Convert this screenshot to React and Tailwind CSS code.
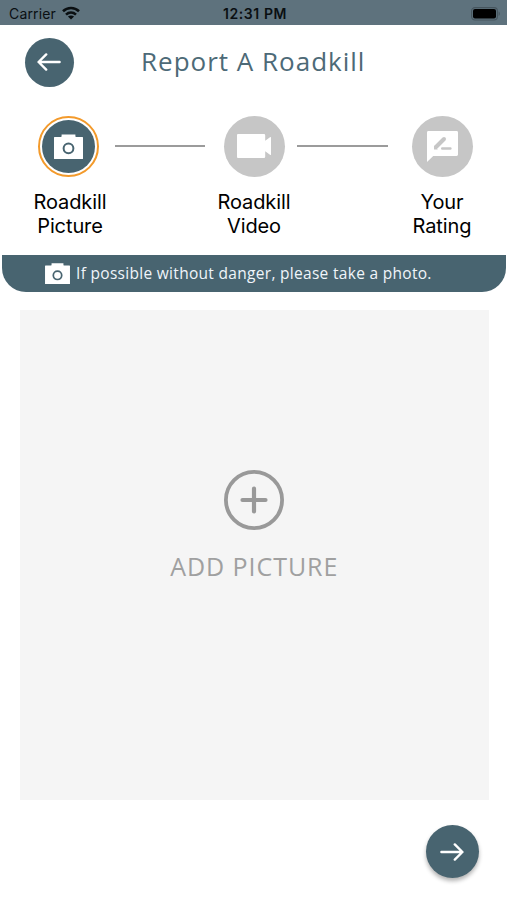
import { clsx } from 'clsx';

function WifiIcon() {
  return (
    <svg viewBox="0 0 18 14" className="w-[18px] h-[14px] -mt-[2px]" fill="none" stroke="#0a0f12" strokeWidth="2.6">
      <path d="M1 5.2C5.5 0.9 12.5 0.9 17 5.2" />
      <path d="M4 8.6C6.9 6 11.1 6 14 8.6" />
      <path d="M9 13.6L5.9 10.5C7.6 9 10.4 9 12.1 10.5Z" fill="#0a0f12" stroke="none" />
    </svg>
  );
}

function BatteryIcon() {
  return (
    <svg viewBox="0 0 30 14" className="w-[30px] h-[14px]">
      <rect x="0.6" y="0.6" width="25.8" height="12.4" rx="3.4" fill="none" stroke="#46555e" strokeWidth="1.1" />
      <rect x="2" y="2" width="23" height="9.6" rx="2" fill="#000" />
      <path d="M27.6 4.6C29.2 5.2 29.2 8.4 27.6 9Z" fill="#46555e" />
    </svg>
  );
}

function CameraIcon({ className }) {
  return (
    <svg viewBox="0 0 29 25" className={className}>
      <path
        d="M0.6 3H6.6C7.4 3 7.6 2.6 7.6 1.8V0.4H21.4V1.8C21.4 2.6 21.6 3 22.4 3H28.4Q29 3 29 3.6V24.4Q29 25 28.4 25H0.6Q0 25 0 24.4V3.6Q0 3 0.6 3Z"
        fill="#fff"
      />
      <circle cx="14.5" cy="14.3" r="4.9" fill="none" stroke="#486470" strokeWidth="2" />
    </svg>
  );
}

function VideoIcon() {
  return (
    <svg viewBox="0 0 34 24" className="w-[34px] h-6" fill="#fff">
      <path d="M1 0H27Q28.2 0 28.2 1.2V6.8L33 3.2Q34 2.6 34 3.6V20.4Q34 21.4 33 20.8L28.2 17.2V22.8Q28.2 24 27 24H1Q0 24 0 23V1Q0 0 1 0Z" />
    </svg>
  );
}

function RatingIcon() {
  return (
    <svg viewBox="0 0 31 31" className="w-[31px] h-[31px]">
      <path d="M1.4 0H29.6Q31 0 31 1.4V23.6Q31 25 29.6 25H6.2L0 31V1.4Q0 0 1.4 0Z" fill="#fff" />
      <path d="M9 16L17 8" stroke="#c6c6c6" strokeWidth="4" strokeLinecap="round" />
      <path d="M7 14.6V18.4H10.8Z" fill="#c6c6c6" />
      <path d="M15.2 17.5H23.4" stroke="#c6c6c6" strokeWidth="2.4" strokeLinecap="round" />
    </svg>
  );
}

function ArrowIcon({ className }) {
  return (
    <svg
      viewBox="0 0 24 18"
      className={clsx('w-6 h-[18px]', className)}
      fill="none"
      stroke="#fff"
      strokeWidth="2.4"
      strokeLinecap="round"
      strokeLinejoin="round"
    >
      <path d="M1.4 9H22.4M14.8 1.4L22.4 9L14.8 16.6" />
    </svg>
  );
}

function Step({ icon, label, active }) {
  return (
    <div className="w-[92px] flex flex-col items-center">
      <div
        className={clsx(
          'w-[61px] h-[61px] rounded-full flex items-center justify-center',
          active ? 'border-2 border-[#f39a2b] bg-white -ml-1' : 'bg-[#c6c6c6]'
        )}
      >
        {active ? (
          <div className="w-[53px] h-[53px] rounded-full bg-[#486470] flex items-center justify-center">
            {icon}
          </div>
        ) : (
          icon
        )}
      </div>
      <p className="mt-[13px] text-center text-[20px] leading-[24.5px] text-black whitespace-pre-line tracking-[-0.1px]">
        {label}
      </p>
    </div>
  );
}

export default function App() {
  return (
    <div className="w-full h-[900px] bg-white flex flex-col overflow-hidden font-['Inter',sans-serif]">
      <div className="h-[25px] shrink-0 bg-[#5e727d] grid grid-cols-3 items-center pl-[9px] pr-[6px] pt-[2px] text-[14px] text-[#0a0f12]">
        <div className="flex items-center gap-[6px]">
          <span className="tracking-[0.15px]">Carrier</span>
          <WifiIcon />
        </div>
        <span className="text-center font-semibold tracking-[0.6px]">12:31 PM</span>
        <div className="flex justify-end">
          <BatteryIcon />
        </div>
      </div>

      <header className="h-[90px] shrink-0 flex pl-[25px] pt-[12.5px]">
        <button
          type="button"
          aria-label="Back"
          className="w-[49px] h-[49px] rounded-full bg-[#486470] flex items-center justify-center"
        >
          <ArrowIcon className="rotate-180 -ml-[2px]" />
        </button>
        <h1 className="ml-[67px] text-[26px] leading-[46px] text-[#4d6a77] tracking-[1px] whitespace-nowrap font-['Open_Sans',sans-serif]">
          Report A Roadkill
        </h1>
      </header>

      <div className="h-[140px] shrink-0 flex pl-6 pt-[0.5px]">
        <Step active icon={<CameraIcon className="w-[29px] h-[25px]" />} label={'Roadkill\nPicture'} />
        <div className="w-[90px] h-[2.5px] mt-[29px] -ml-px bg-[#9b9b9b]" />
        <div className="ml-[3px]">
          <Step icon={<VideoIcon />} label={'Roadkill\nVideo'} />
        </div>
        <div className="w-[91px] h-[2.5px] mt-[29px] -ml-[3px] bg-[#9b9b9b]" />
        <div className="ml-2">
          <Step icon={<RatingIcon />} label={'Your\nRating'} />
        </div>
      </div>

      <div className="h-[36.5px] shrink-0 ml-[2px] mr-px pl-[43px] bg-[#486470] rounded-b-[24px] flex items-center gap-[6px]">
        <CameraIcon className="w-[25px] h-[21.5px]" />
        <p className="text-[15.5px] text-[#f0f5fa] tracking-[0.3px] whitespace-nowrap font-['Open_Sans',sans-serif]">
          If possible without danger, please take a photo.
        </p>
      </div>

      <button
        type="button"
        className="mt-[18.5px] ml-5 w-[468.5px] h-[490px] shrink-0 bg-[#f5f5f5] flex flex-col items-center pt-[160px]"
      >
        <svg viewBox="0 0 60 60" className="w-[60px] h-[60px]" fill="none" stroke="#999">
          <circle cx="30" cy="30" r="28.1" strokeWidth="3.8" />
          <path d="M30 18.5V41.5M18.5 30H41.5" strokeWidth="4.2" strokeLinecap="round" />
        </svg>
        <span className="mt-[18px] text-[25px] leading-9 text-[#a0a0a0] tracking-[0.95px] whitespace-nowrap font-['Open_Sans',sans-serif]">
          ADD PICTURE
        </span>
      </button>

      <div className="flex justify-end pt-[25px] pr-[28.5px]">
        <button
          type="button"
          aria-label="Next"
          className="w-[53px] h-[53px] rounded-full bg-[#486470] shadow-[0_3px_4px_rgba(0,0,0,0.3)] flex items-center justify-center"
        >
          <ArrowIcon />
        </button>
      </div>
    </div>
  );
}
